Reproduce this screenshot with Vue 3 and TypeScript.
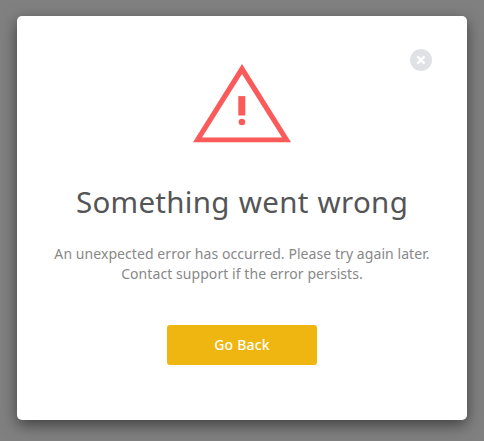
<script setup lang="ts">
import { ref } from 'vue'

const title = ref<string>('Something went wrong')
const lines = ref<string[]>([
  'An unexpected error has occurred. Please try again later.',
  'Contact support if the error persists.',
])
</script>

<template>
  <div class="backdrop">
    <section class="dialog" role="dialog">
      <button class="close" type="button" aria-label="Close">
        <svg width="22" height="22" viewBox="0 0 22 22">
          <circle cx="11" cy="11" r="11" fill="#dfe1e4" />
          <path d="M7.4 7.4 L14.6 14.6 M14.6 7.4 L7.4 14.6" stroke="#fff" stroke-width="2.3" />
        </svg>
      </button>
      <svg class="warning" width="98" height="79" viewBox="0 0 98 79">
        <path fill="#fb5a5a" fill-rule="evenodd" d="M49 0 L98 78.3 H0 Z M49 10 L9 73.5 H89 Z" />
        <rect x="45.3" y="32.1" width="7" height="19.4" fill="#fb5a5a" />
        <circle cx="48.9" cy="58" r="3.3" fill="#fb5a5a" />
      </svg>
      <h1 class="title">{{ title }}</h1>
      <div class="message">
        <p v-for="line in lines" :key="line">{{ line }}</p>
      </div>
      <button class="action" type="button">Go Back</button>
    </section>
  </div>
</template>

<style>
body {
  background: #808080;
}
</style>

<style scoped>
.backdrop {
  box-sizing: border-box;
  width: 484px;
  height: 441px;
  padding: 16px 17px 21px;
  overflow: hidden;
  background: #808080;
  font-family: "Noto Sans", sans-serif;
}
.dialog {
  position: relative;
  box-sizing: border-box;
  display: flex;
  flex-direction: column;
  align-items: center;
  width: 450px;
  height: 404px;
  padding-top: 48px;
  border-radius: 5px;
  background: #fff;
  box-shadow: 0 5px 15px rgba(0, 0, 0, 0.5);
}
.close {
  position: absolute;
  top: 33px;
  right: 35px;
  width: 22px;
  height: 22px;
  padding: 0;
  border: 0;
  background: none;
}
.close svg,
.warning {
  display: block;
}
.title {
  margin: 39px 0 0;
  font-size: 29.5px;
  font-weight: 400;
  line-height: 40px;
  letter-spacing: 0.3px;
  word-spacing: 1px;
  color: #545557;
  white-space: nowrap;
}
.message {
  margin-top: 22px;
  font-size: 14px;
  line-height: 20px;
  letter-spacing: 0.07px;
  color: #888;
  text-align: center;
  white-space: nowrap;
}
.message p {
  margin: 0;
}
.action {
  width: 150px;
  height: 40px;
  margin-top: 41px;
  padding: 0;
  border: 0;
  border-radius: 3px;
  background: #efb612;
  color: #fff;
  font-family: inherit;
  font-size: 14px;
  font-weight: 500;
  letter-spacing: 0.2px;
  line-height: 40px;
}
</style>
